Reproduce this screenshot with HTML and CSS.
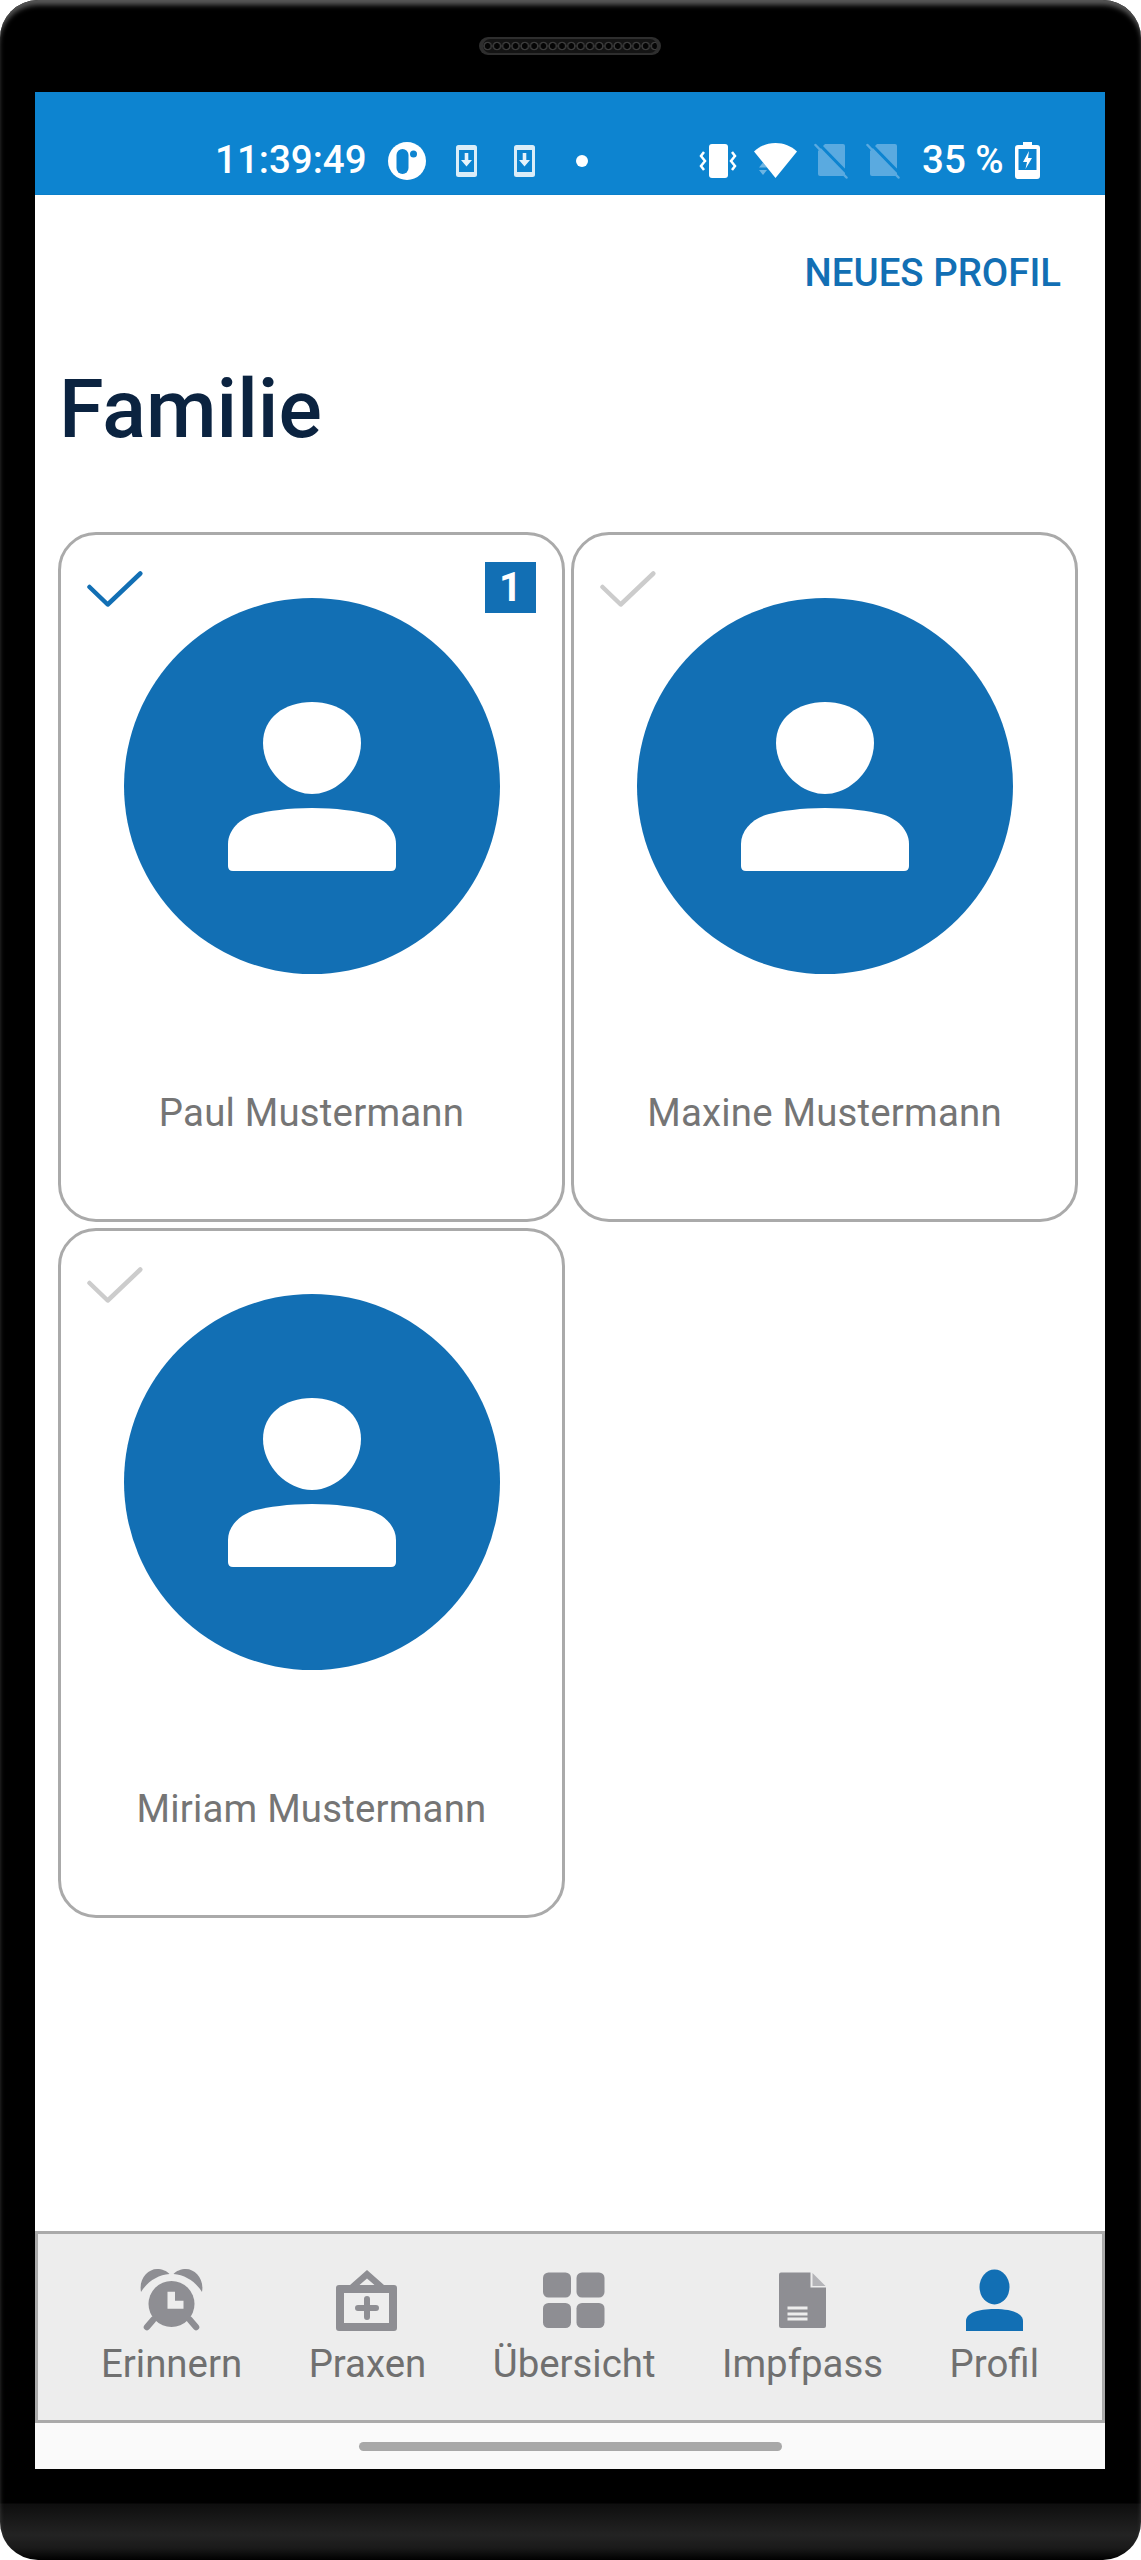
FILE: index.html
```html
<!DOCTYPE html>
<html lang="de">
<head>
<meta charset="utf-8">
<title>Familie</title>
<link rel="stylesheet" href="styles.css">
</head>
<body>
<svg class="defs" width="0" height="0" aria-hidden="true">
  <symbol id="avatar" viewBox="0 0 376 376">
    <circle cx="188" cy="188" r="188" fill="#126fb4"/>
    <path fill="#fff" d="M188 104C216 104 237 120 237 145C237 172 213 196 188 196C163 196 139 172 139 145C139 120 160 104 188 104Z"/>
    <path fill="#fff" d="M188 210C212 210 232 213 244 216C260 220 272 232 272 246V268Q272 273 267 273H109Q104 273 104 268V246C104 232 116 220 132 216C144 213 164 210 188 210Z"/>
  </symbol>
  <symbol id="check" viewBox="0 0 56 36">
    <path fill="none" stroke="currentColor" stroke-width="4.5" stroke-linecap="round" stroke-linejoin="round" d="M2.500 16L20.700 33.500L53.300 2.500"/>
  </symbol>
  <symbol id="dl" viewBox="0 0 21 32">
    <rect width="21" height="32" rx="2.5" fill="#fff" opacity=".85"/>
    <rect x="3" y="5" width="15" height="22" fill="#0d84d0"/>
    <path d="M8.7 8h3.6v7h3.7l-5.5 6.5L5 15h3.7Z" fill="#fff" opacity=".9"/>
  </symbol>
  <symbol id="sim" viewBox="0 0 34 36">
    <path fill="#5aaae0" d="M11 1H29a2 2 0 0 1 2 2V31a2 2 0 0 1-2 2H6a2 2 0 0 1-2-2V8Z"/>
    <path stroke="#0d84d0" stroke-width="3" d="M3 -1L36 33"/>
    <path stroke="#5aaae0" stroke-width="2.500" stroke-linecap="round" d="M1.500 2L32.500 34.500"/>
  </symbol>
</svg>
<div class="phone">
  <div class="speaker"></div>
  <main class="screen">
    <header class="status">
      <span class="clock">11:39:49</span>
      <svg class="logo" viewBox="0 0 38 38"><circle cx="19" cy="19" r="19" fill="#fff"/><rect x="8.500" y="7" width="12" height="25" rx="6" fill="#0d84d0"/><circle cx="25.500" cy="12" r="3.500" fill="#0d84d0"/></svg>
      <svg class="dl"><use href="#dl"/></svg>
      <svg class="dl dl-2"><use href="#dl"/></svg>
      <span class="dot"></span>
      <span class="status-space"></span>
      <svg class="vibrate" viewBox="0 0 38 34"><rect x="10" y="0" width="19" height="34" rx="3" fill="#fff"/><path fill="none" stroke="#fff" stroke-width="2.500" d="M5 8L2 12L6 17L2 22L5 26M33 8L36 12L32 17L36 22L33 26"/></svg>
      <svg class="wifi" viewBox="0 0 43 35"><path fill="#fff" d="M21.500 0C30 0 37 3 43 8.500L21.500 35L0 8.500C6 3 13 0 21.500 0Z"/><path fill="#fff" fill-opacity=".4" d="M5 24.500L9 19.500L13 24.500ZM5 27H13L9 32Z"/></svg>
      <svg class="sim"><use href="#sim"/></svg>
      <svg class="sim sim-2"><use href="#sim"/></svg>
      <span class="battery-pct">35 %</span>
      <svg class="battery" viewBox="0 0 25 37"><path fill="#fff" d="M8 0H17V3H22a3 3 0 0 1 3 3V34a3 3 0 0 1-3 3H3a3 3 0 0 1-3-3V6a3 3 0 0 1 3-3H8Z"/><rect x="3.500" y="7" width="18" height="21" fill="#0d84d0"/><path fill="#fff" d="M14 9L8 20H12L10.500 27L17 16H13Z"/></svg>
    </header>

    <section class="content">
      <div class="actions"><a class="new-profile">NEUES PROFIL</a></div>
      <h1 class="title">Familie</h1>
      <div class="cards">
        <article class="card">
          <svg class="check check-on"><use href="#check"/></svg>
          <span class="badge">1</span>
          <svg class="avatar"><use href="#avatar"/></svg>
          <p class="name">Paul Mustermann</p>
        </article>
        <article class="card">
          <svg class="check"><use href="#check"/></svg>
          <svg class="avatar"><use href="#avatar"/></svg>
          <p class="name">Maxine Mustermann</p>
        </article>
        <article class="card">
          <svg class="check"><use href="#check"/></svg>
          <svg class="avatar"><use href="#avatar"/></svg>
          <p class="name">Miriam Mustermann</p>
        </article>
      </div>
    </section>

    <nav class="tabs">
      <a class="tab">
        <svg class="tab-icon" width="63" height="63" viewBox="0 0 63 63">
          <circle cx="31.500" cy="35" r="23" fill="#8e8e93"/>
          <path fill="#ededed" d="M27.500 22.700H35V31.700H43.500V39.700H27.500Z"/>
          <path fill="#8e8e93" d="M1 23C-1.500 10 8 0 17 0C22 0 27 2 29.500 5C18 6 8 12 1 23ZM62 23C64.500 10 55 0 46 0C41 0 36 2 33.500 5C45 6 55 12 62 23Z"/>
          <path stroke="#8e8e93" stroke-width="6.500" stroke-linecap="round" d="M13 51L7 58M50 51L56 58"/>
        </svg>
        <span class="tab-label">Erinnern</span>
      </a>
      <a class="tab">
        <svg class="tab-icon" width="62" height="63" viewBox="0 0 62 63">
          <path fill="#8e8e93" d="M31 1L48 16H58a3 3 0 0 1 3 3V59a3 3 0 0 1-3 3H3a3 3 0 0 1-3-3V19a3 3 0 0 1 3-3H14ZM31 9.500L23.500 16H38.500ZM8 24V54H53V24Z"/>
          <path fill="#8e8e93" d="M28 30a3 3 0 0 1 6 0V36H40a3 3 0 0 1 0 6H34V48a3 3 0 0 1-6 0V42H22a3 3 0 0 1 0-6H28Z"/>
        </svg>
        <span class="tab-label">Praxen</span>
      </a>
      <a class="tab">
        <svg class="tab-icon" width="62" height="63" viewBox="0 0 62 63">
          <rect x="0" y="3.500" width="28" height="25" rx="5.500" fill="#8e8e93"/><rect x="33.500" y="3.500" width="28" height="25" rx="5.500" fill="#8e8e93"/>
          <rect x="0" y="34" width="28" height="25" rx="5.500" fill="#8e8e93"/><rect x="33.500" y="34" width="28" height="25" rx="5.500" fill="#8e8e93"/>
        </svg>
        <span class="tab-label">Übersicht</span>
      </a>
      <a class="tab">
        <svg class="tab-icon" width="47" height="63" viewBox="0 0 47 63">
          <path fill="#8e8e93" d="M2 3.500H31.500V18.500H47V57a2 2 0 0 1-2 2H2a2 2 0 0 1-2-2V5.500a2 2 0 0 1 2-2Z"/>
          <path fill="#b4b4b8" d="M33.500 4L46.500 17H33.500Z"/>
          <path fill="#ededed" d="M8.500 37.500H28.500V40.500H8.500ZM8.500 43.500H28.500V46.500H8.500ZM8.500 48.500H28.500V51.500H8.500Z"/>
        </svg>
        <span class="tab-label">Impfpass</span>
      </a>
      <a class="tab">
        <svg class="tab-icon" width="57" height="63" viewBox="0 0 57 63">
          <ellipse cx="28.500" cy="18" rx="15" ry="17.500" fill="#126fb4"/>
          <path fill="#126fb4" d="M0 62V52C0 44 12 40 28.500 40S57 44 57 52V62Z"/>
        </svg>
        <span class="tab-label">Profil</span>
      </a>
    </nav>
    <div class="homebar"><span class="home-pill"></span></div>
  </main>
</div>
</body>
</html>
```
FILE: styles.css
```css
* { box-sizing: border-box; }
html, body { margin: 0; padding: 0; background: #fff; }
body { font-family: Roboto, "Liberation Sans", sans-serif; }
.defs { position: absolute; }

.phone {
  position: relative;
  width: 1141px;
  height: 2560px;
  padding: 92px 36px 0 35px;
  border-radius: 38px;
  background: linear-gradient(to bottom, #000 0, #000 2503px, #0e0e0e 2504px, #232323 2535px, #1a1a1a 2548px, #000 2560px);
  box-shadow: inset 0 6px 5px -1px #575757;
}
.speaker {
  position: absolute;
  left: 479px;
  top: 37px;
  width: 182px;
  height: 18px;
  padding: 2px 4px;
  border-radius: 9px;
  background: #2e2e2e;
  background-clip: padding-box;
}
.speaker::before {
  content: "";
  display: block;
  height: 14px;
  border-radius: 7px;
  background: radial-gradient(circle at 4.65px 50%, #050505 0, #050505 2.6px, #3c3c3c 3.2px, #3c3c3c 4px, #141414 4.6px) 0 0 / 9.3px 100% repeat-x;
}

.screen { display: flex; flex-direction: column; height: 2377px; background: #fff; }

.status {
  display: flex;
  align-items: center;
  height: 103px;
  flex: none;
  padding: 35px 0 0 180px;
  background: #0d84d0;
  border-bottom: 1px solid #0a7fca;
  color: #fff;
  font-weight: 500;
  font-size: 38.5px;
}
.clock { width: 173px; flex: none; line-height: 1; }
.logo { width: 38px; height: 38px; flex: none; }
.dl { width: 21px; height: 32px; flex: none; margin-left: 30px; }
.dl-2 { margin-left: 37px; }
.dot { width: 12px; height: 12px; flex: none; margin-left: 41px; border-radius: 50%; background: #fff; }
.status-space { width: 111px; flex: none; }
.vibrate { width: 38px; height: 34px; flex: none; }
.wifi { width: 43px; height: 35px; flex: none; margin-left: 17px; }
.sim { width: 34px; height: 36px; flex: none; margin-left: 17px; }
.sim-2 { margin-left: 18px; }
.battery-pct { flex: none; margin-left: 22px; line-height: 1; }
.battery { width: 25px; height: 37px; flex: none; margin-left: 11px; }

.content { flex: 1; min-height: 0; padding: 0 23px; }
.actions { display: flex; justify-content: flex-end; padding: 57px 21px 0 0; }
.new-profile { font-size: 38.4px; line-height: 42px; font-weight: 500; color: #126fb4; }
.title { margin: 71px 0 0 1px; font-size: 81px; line-height: 90px; font-weight: 500; color: #0b2340; }

.cards { display: grid; grid-template-columns: 507px 507px; column-gap: 6px; row-gap: 6px; margin-top: 77px; }
.card {
  position: relative;
  display: flex;
  flex-direction: column;
  align-items: center;
  height: 690px;
  padding-top: 63px;
  border: 3px solid #aaa;
  border-radius: 38px;
  background: #fff;
}
.check { position: absolute; left: 26px; top: 36px; width: 56px; height: 36px; color: #ccc; }
.check-on { color: #126fb4; }
.badge {
  position: absolute;
  top: 27px;
  right: 26px;
  width: 51px;
  height: 51px;
  background: #126fb4;
  color: #fff;
  font-size: 40px;
  font-weight: 700;
  line-height: 51px;
  text-align: center;
}
.avatar { width: 376px; height: 376px; flex: none; }
.name { margin: 118px 0 0; font-size: 38.4px; line-height: 42px; letter-spacing: .2px; color: #757575; }

.tabs {
  display: flex;
  justify-content: space-between;
  height: 192px;
  flex: none;
  padding: 35px 63px 0;
  border: 3px solid #aaa;
  background: #ededed;
}
.tab { display: flex; flex-direction: column; align-items: center; }
.tab-icon { flex: none; display: block; }
.tab-label { font-size: 38.4px; line-height: 42px; color: #707070; margin-top: 11px; }

.homebar { flex: none; height: 46px; display: flex; justify-content: center; padding-top: 19px; background: #fafafa; }
.home-pill { width: 423px; height: 9px; border-radius: 5px; background: #a8a8a8; }
```
